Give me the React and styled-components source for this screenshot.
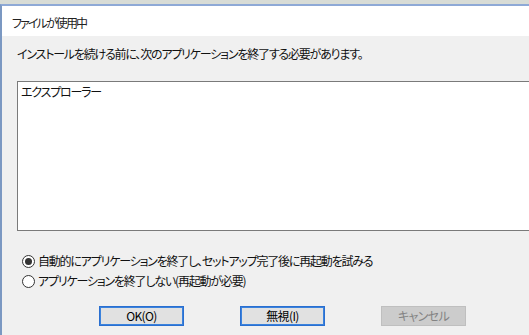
import React from "react";
import styled, { createGlobalStyle } from "styled-components";

const Global = createGlobalStyle`
  html, body { margin: 0; padding: 0; background: #d9dcd8; }
  body {
    font-family: "Noto Sans CJK JP", "Liberation Sans", sans-serif;
    font-size: 12px;
    color: #000;
  }
`;

const Frame = styled.div`
  width: 529px;
  height: 335px;
  padding-top: 4px;
  box-sizing: border-box;
  background: #d8dcd6;
  overflow: hidden;
`;

const Window = styled.div`
  height: 100%;
  box-sizing: border-box;
  border-top: 2px solid #8ea9d6;
  border-left: 2px solid #7b98c2;
  background: #f0f0f0;
  display: flex;
  flex-direction: column;
`;

const Header = styled.div`
  height: 30px;
  flex: none;
  background: #ffffff;
  display: flex;
  align-items: center;
  padding: 2px 0 0 10px;
  box-sizing: border-box;
  font-feature-settings: "palt";
  letter-spacing: -1.9px;
  color: #222;
`;

const Body = styled.div`
  flex: 1;
  display: flex;
  flex-direction: column;
  padding: 10px 0 0 15px;
`;

const Text = styled.div`
  line-height: 16px;
  font-feature-settings: "palt";
  letter-spacing: -1.2px;
  white-space: nowrap;
  color: #111;
`;

const ListBox = styled.div`
  margin-top: 19px;
  height: 150px;
  width: 540px;
  flex: none;
  box-sizing: border-box;
  background: #fff;
  border: 1px solid #7a7a7a;
  padding: 2px 0 0 3px;
`;

const Options = styled.div`
  margin-top: 20px;
  display: flex;
  flex-direction: column;
  padding-left: 5px;
`;

const RadioRow = styled.label`
  height: 20px;
  display: flex;
  align-items: center;
  gap: 3px;
`;

const RadioCircle = styled.span`
  width: 11px;
  height: 11px;
  border: 1px solid #333;
  border-radius: 50%;
  background: #fff;
  display: flex;
  align-items: center;
  justify-content: center;
  flex: none;
  &::after {
    content: "";
    width: 7px;
    height: 7px;
    border-radius: 50%;
    background: ${(p) => (p.$checked ? "#333" : "transparent")};
  }
`;

const Buttons = styled.div`
  margin-top: 15px;
  display: flex;
  gap: 56px;
  padding-left: 82px;
`;

const Button = styled.button`
  width: 85px;
  height: 20px;
  box-sizing: border-box;
  padding: 0;
  margin: 0;
  font-family: inherit;
  font-size: 12px;
  line-height: 16px;
  font-feature-settings: "palt";
  letter-spacing: -0.6px;
  border: 1px solid ${(p) => (p.$disabled ? "#bfbfbf" : "#2a6fd0")};
  background: ${(p) => (p.$disabled ? "#cccccc" : "#e1e1e1")};
  color: ${(p) => (p.$disabled ? "#838383" : "#000")};
  box-shadow: ${(p) => (p.$disabled ? "none" : "inset 0 0 0 1px #3b82dc")};
`;

export default function App() {
  return (
    <>
      <Global />
      <Frame>
        <Window>
          <Header>ファイルが使用中</Header>
          <Body>
            <Text>インストールを続ける前に、次のアプリケーションを終了する必要があります。</Text>
            <ListBox>
              <Text>エクスプローラー</Text>
            </ListBox>
            <Options>
              <RadioRow>
                <RadioCircle $checked />
                <Text>自動的にアプリケーションを終了し、セットアップ完了後に再起動を試みる</Text>
              </RadioRow>
              <RadioRow>
                <RadioCircle />
                <Text>アプリケーションを終了しない(再起動が必要)</Text>
              </RadioRow>
            </Options>
            <Buttons>
              <Button>OK(O)</Button>
              <Button>無視(I)</Button>
              <Button $disabled>キャンセル</Button>
            </Buttons>
          </Body>
        </Window>
      </Frame>
    </>
  );
}
